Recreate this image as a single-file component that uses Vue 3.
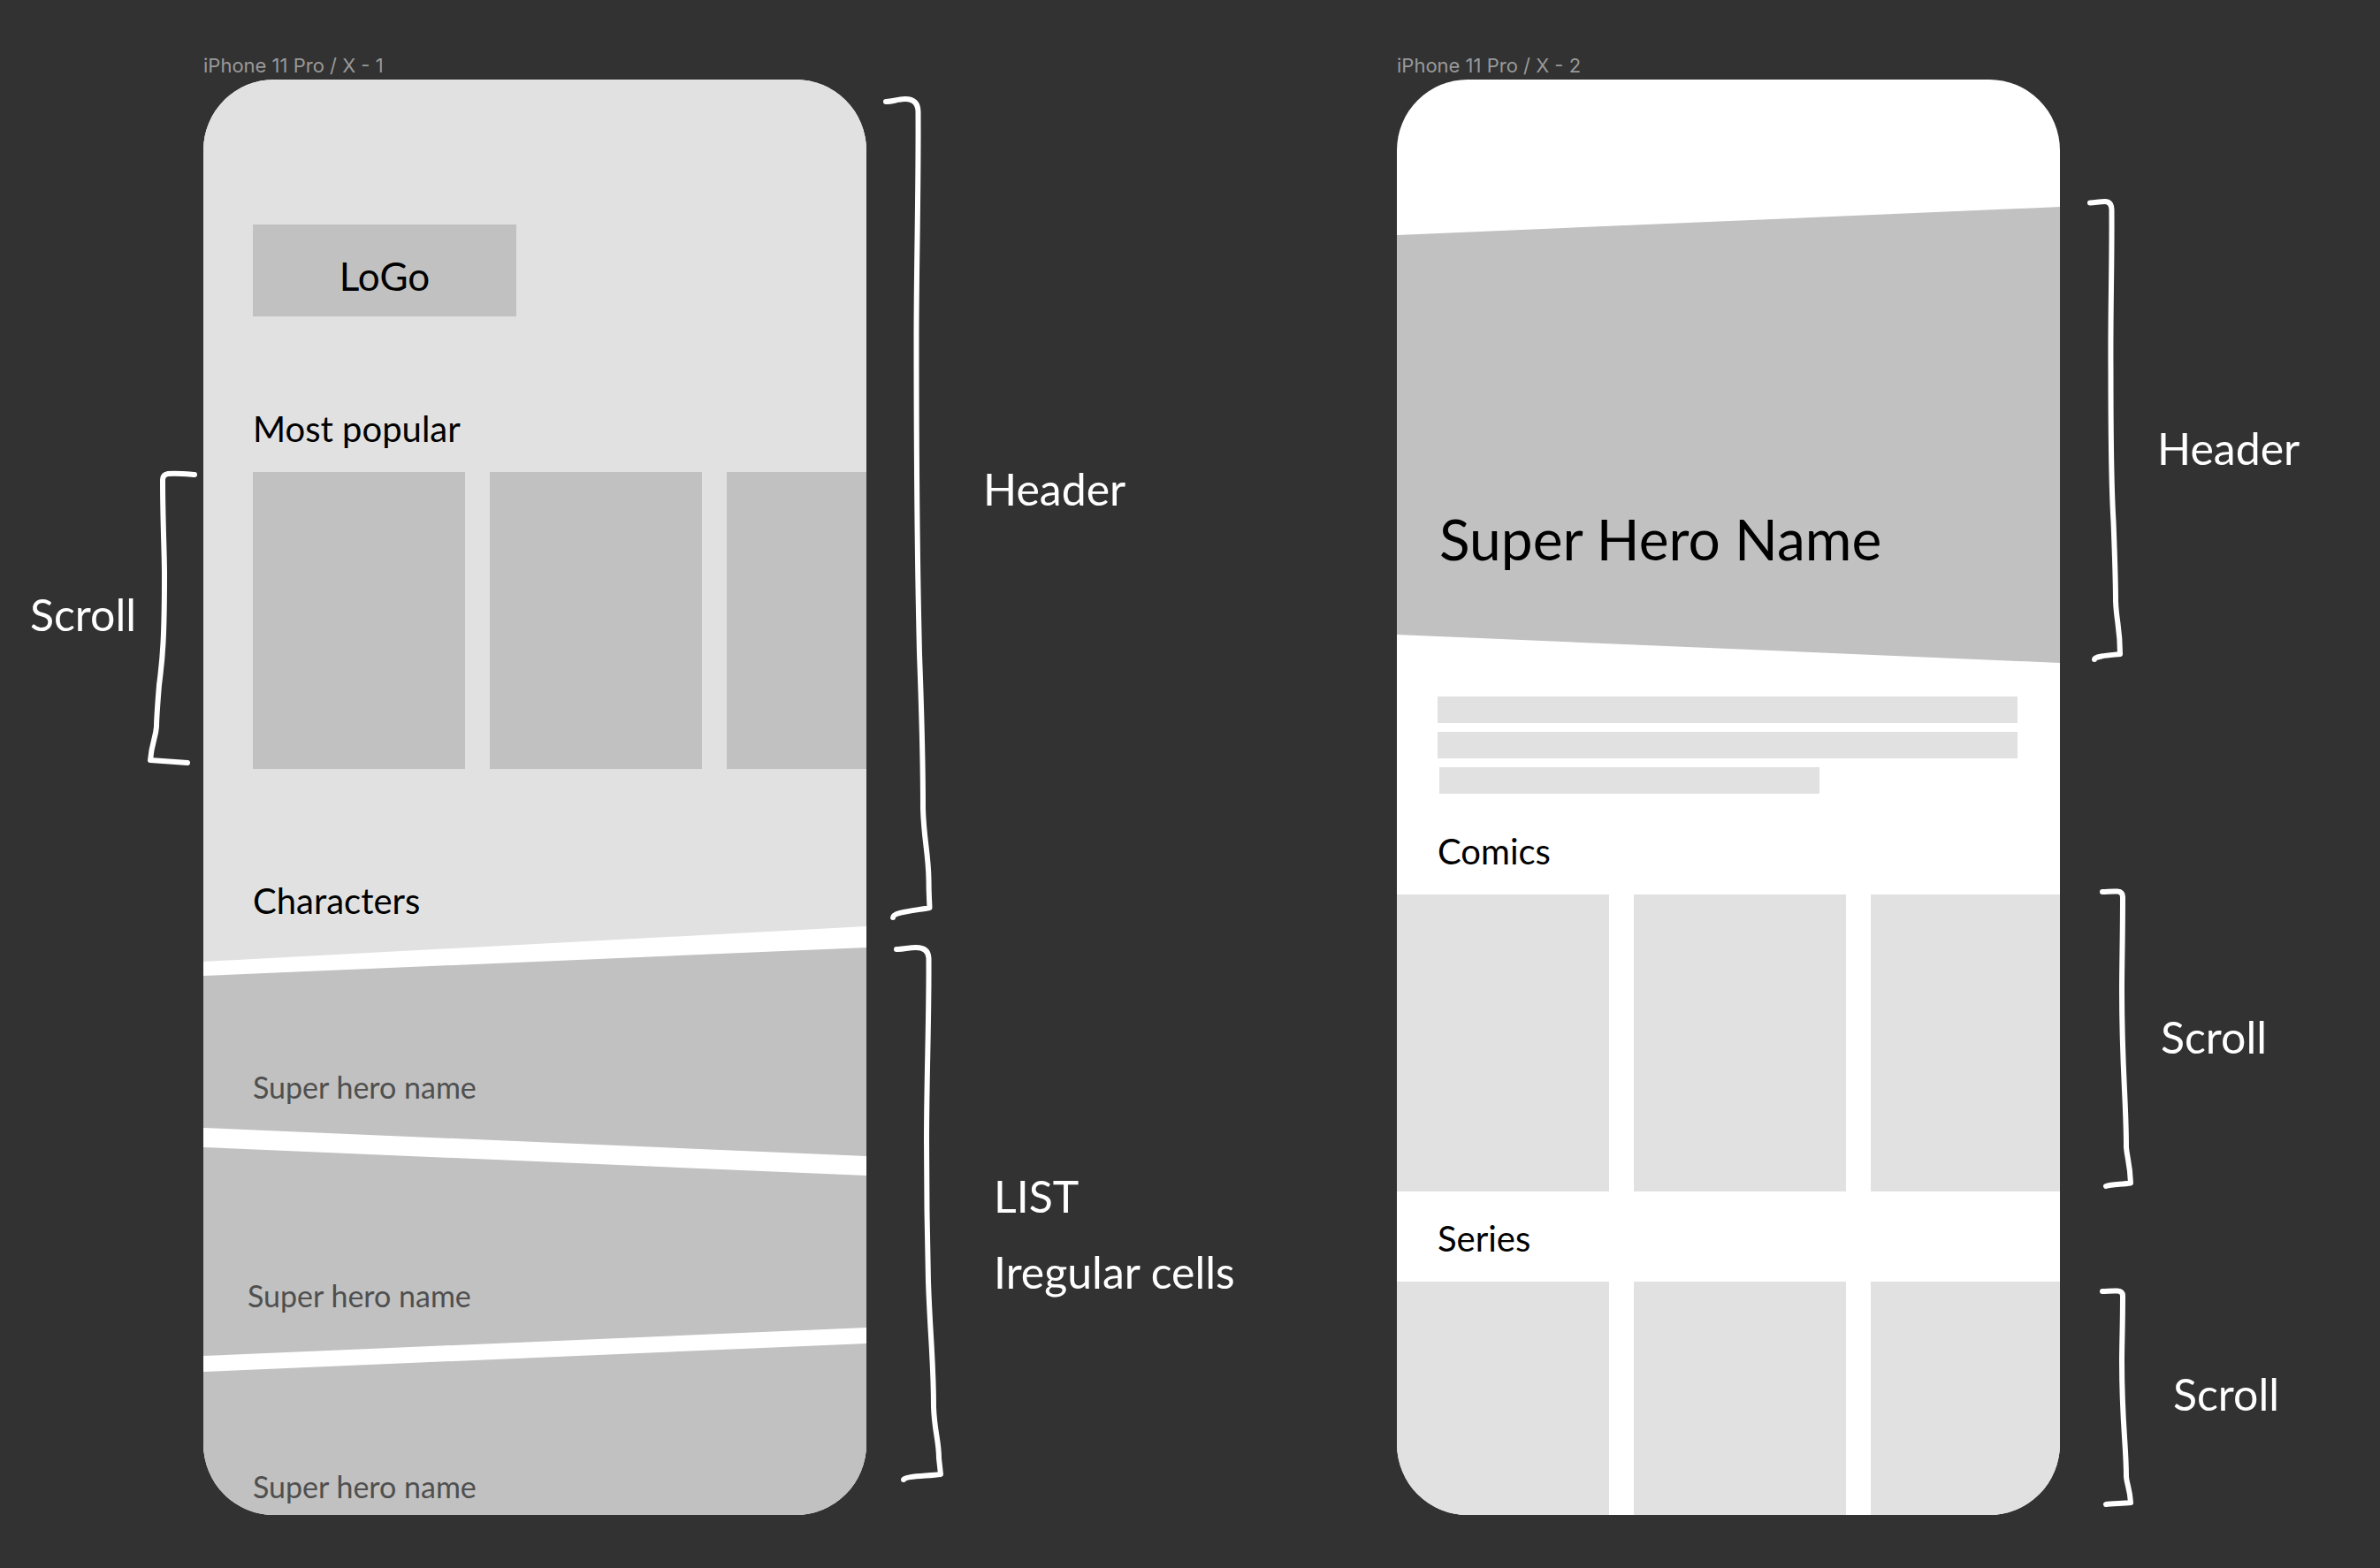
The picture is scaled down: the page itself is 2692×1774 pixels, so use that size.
<script setup>
const popular = [1, 2, 3]
const comics = [1, 2, 3]
const series = [1, 2, 3]
const heroes = [
  { id: 1, name: 'Super hero name', shape: 'rising' },
  { id: 2, name: 'Super hero name', shape: 'falling' },
  { id: 3, name: 'Super hero name', shape: 'last' },
]
</script>

<template>
  <main class="canvas">
    <aside class="gutter gutter-start">
      <div class="note note-popular">
        <p class="label">Scroll</p>
        <svg class="bracket" width="60" height="340" viewBox="166 530 60 340" aria-hidden="true">
          <path d="M220 537 C208 536 198 535 190 536 Q184 537 184 543 C184 590 186 625 186 650 C186 720 184 745 180 775 C178 800 177 812 177 822 C176 836 172 838 170 860 L212 863" />
        </svg>
      </div>
    </aside>

    <section class="board">
      <h2 class="board-title">iPhone 11 Pro / X - 1</h2>
      <div class="screen">
        <header class="home-header">
          <div class="logo">LoGo</div>
          <h3 class="heading">Most popular</h3>
          <div class="strip">
            <div v-for="n in popular" :key="n" class="tile tile-dark"></div>
          </div>
          <h3 class="heading heading-characters">Characters</h3>
        </header>
        <ul class="cells">
          <li v-for="hero in heroes" :key="hero.id" class="cell" :class="hero.shape">{{ hero.name }}</li>
        </ul>
      </div>
    </section>

    <aside class="gutter gutter-middle">
      <div class="note note-home-header">
        <svg class="bracket" width="60" height="938" viewBox="996 106 60 938" aria-hidden="true">
          <path d="M1002 115 C1010 115 1016 112 1024 112 Q1038 112 1038.500 126 C1039 220 1036.500 300 1036.500 380 C1036.500 600 1038 650 1040 740 C1043 820 1044 860 1044 915 C1045 950 1050 965 1050.500 995 C1050.500 1010 1051 1015 1051.500 1027 C1036 1030 1010 1032 1010 1038" />
        </svg>
        <p class="label">Header</p>
      </div>
      <div class="note note-list">
        <svg class="bracket" width="62" height="618" viewBox="1008 1064 62 618" aria-hidden="true">
          <path d="M1014 1074 C1022 1074 1028 1072 1036 1072 Q1050 1072 1050.500 1084 C1051 1150 1048 1220 1048 1290 C1048 1370 1049 1410 1050 1450 C1052 1510 1056 1540 1056 1592 C1057 1620 1062 1630 1062 1650 L1064 1668 C1050 1670 1022 1670 1022 1674" />
        </svg>
        <p class="label">LIST<br>Iregular cells</p>
      </div>
    </aside>

    <section class="board">
      <h2 class="board-title">iPhone 11 Pro / X - 2</h2>
      <div class="screen">
        <header class="hero">
          <h1 class="hero-name">Super Hero Name</h1>
        </header>
        <div class="summary">
          <span class="line"></span>
          <span class="line"></span>
          <span class="line line-short"></span>
        </div>
        <h3 class="heading heading-detail">Comics</h3>
        <div class="strip">
          <div v-for="n in comics" :key="n" class="tile"></div>
        </div>
        <h3 class="heading heading-detail heading-series">Series</h3>
        <div class="strip">
          <div v-for="n in series" :key="n" class="tile"></div>
        </div>
      </div>
    </section>

    <aside class="gutter gutter-end">
      <div class="note note-hero">
        <svg class="bracket" width="48" height="532" viewBox="2358 220 48 532" aria-hidden="true">
          <path d="M2364 229.500 C2370 229.500 2374 228 2381 228 Q2388 228 2388.500 237 C2389 300 2387 350 2387.500 420 C2387.500 500 2388 550 2390.500 590 C2392 630 2393 655 2393 680 C2394 705 2398 710 2398 740 C2390 741 2369 742 2369 746" />
        </svg>
        <p class="label">Header</p>
      </div>
      <div class="note note-comics">
        <svg class="bracket" width="48" height="348" viewBox="2370 1002 48 348" aria-hidden="true">
          <path d="M2378 1009 C2384 1009 2388 1008 2395 1008.500 Q2401 1009 2401 1015 C2401 1060 2400 1090 2400 1120 C2400 1210 2405 1245 2405 1298 C2406 1311 2409 1315 2410 1338.500 C2400 1340 2388 1340 2382 1342" />
        </svg>
        <p class="label">Scroll</p>
      </div>
      <div class="note note-series">
        <svg class="bracket" width="48" height="256" viewBox="2370 1454 48 256" aria-hidden="true">
          <path d="M2378 1461 C2384 1461 2388 1460 2395 1460.500 Q2401 1461 2401 1466 C2401 1500 2400 1520 2400 1540 C2400 1610 2405 1635 2405 1671 C2406 1681 2409 1684 2410 1700 C2400 1701 2388 1701 2382 1702" />
        </svg>
        <p class="label">Scroll</p>
      </div>
    </aside>
  </main>
</template>

<style>
body {
  margin: 0;
  background: #323232;
}
</style>

<style scoped>
.canvas {
  display: grid;
  grid-template-columns: 230fr 750px 600fr 750px 362fr;
  align-items: start;
  padding: 60px 0;
  background: #323232;
  color: #000;
  font-family: Lato, "Liberation Sans", sans-serif;
}

h1, h2, h3, p, ul {
  margin: 0;
  padding: 0;
  font-weight: 400;
}

.board-title {
  height: 30px;
  color: #999;
  font: 400 22px/28px Inter, "Liberation Sans", sans-serif;
}

.screen {
  height: 1624px;
  overflow: hidden;
  border-radius: 80px;
  background: #fff;
}

/* Home screen */
.home-header {
  box-sizing: border-box;
  height: 998px;
  padding: 164px 0 0 56px;
  background: #e1e1e1;
  clip-path: polygon(0 0, 100% 0, 100% calc(100% - 40px), 0 100%);
}

.logo {
  width: 298px;
  height: 104px;
  margin-bottom: 96px;
  background: #c1c1c1;
  font-size: 44px;
  line-height: 116px;
  text-align: center;
}

.heading {
  height: 80px;
  font-size: 40px;
  line-height: 62px;
}

.heading-characters {
  margin-top: 118px;
}

.strip {
  display: flex;
  gap: 28px;
}

.tile {
  flex: none;
  width: 240px;
  height: 336px;
  background: #e1e1e1;
}

.tile-dark {
  background: #c1c1c1;
}

.cells {
  list-style: none;
}

.cell {
  box-sizing: border-box;
  height: 236px;
  padding-left: 56px;
  background: #c1c1c1;
  color: #4f4f4f;
  font-size: 34px;
  line-height: 48px;
}

.rising {
  margin-top: -16px;
  padding-top: 134px;
  clip-path: polygon(0 32px, 100% 0, 100% 100%, 0 calc(100% - 32px));
}

.falling {
  margin-top: -10px;
  padding: 144px 0 0 50px;
  clip-path: polygon(0 0, 100% 32px, 100% calc(100% - 32px), 0 100%);
}

.last {
  margin-top: -14px;
  padding-top: 138px;
  clip-path: polygon(0 32px, 100% 0, 100% 100%, 0 100%);
}

/* Detail screen */
.hero {
  box-sizing: border-box;
  height: 516px;
  margin-top: 144px;
  padding: 336px 0 0 48px;
  background: #c1c1c1;
  clip-path: polygon(0 32px, 100% 0, 100% 100%, 0 calc(100% - 32px));
}

.hero-name {
  font-size: 64px;
  line-height: 80px;
}

.summary {
  display: flex;
  flex-direction: column;
  gap: 10px;
  padding: 38px 48px 0 46px;
}

.line {
  height: 30px;
  background: #e1e1e1;
}

.line-short {
  width: 430px;
  margin-left: 2px;
}

.heading-detail {
  margin-top: 34px;
  padding-left: 46px;
}

.heading-series {
  margin-top: 22px;
}

/* Annotations */
.gutter {
  display: flex;
  flex-direction: column;
}

.note {
  display: flex;
  align-items: flex-start;
}

.bracket {
  flex: none;
  fill: none;
  stroke: #fff;
  stroke-width: 6;
  stroke-linecap: round;
  stroke-linejoin: round;
}

.label {
  color: #fff;
  font-size: 50px;
  line-height: 86px;
  white-space: nowrap;
}

.gutter-start {
  padding: 470px 4px 0 0;
}

.note-popular {
  justify-content: flex-end;
  gap: 12px;
}

.note-popular .label {
  margin-top: 122px;
}

.gutter-middle {
  gap: 20px;
  padding: 46px 0 0 16px;
}

.note-home-header {
  gap: 56px;
}

.note-home-header .label {
  margin-top: 404px;
}

.note-list {
  gap: 54px;
  margin-left: 12px;
}

.note-list .label {
  margin-top: 246px;
}

.gutter-end {
  padding: 160px 0 0 28px;
}

.note-hero {
  gap: 34px;
}

.note-hero .label {
  margin-top: 244px;
}

.note-comics {
  gap: 26px;
  margin: 250px 0 104px 12px;
}

.note-comics .label {
  margin-top: 128px;
}

.note-series {
  gap: 40px;
  margin-left: 12px;
}

.note-series .label {
  margin-top: 80px;
}
</style>
